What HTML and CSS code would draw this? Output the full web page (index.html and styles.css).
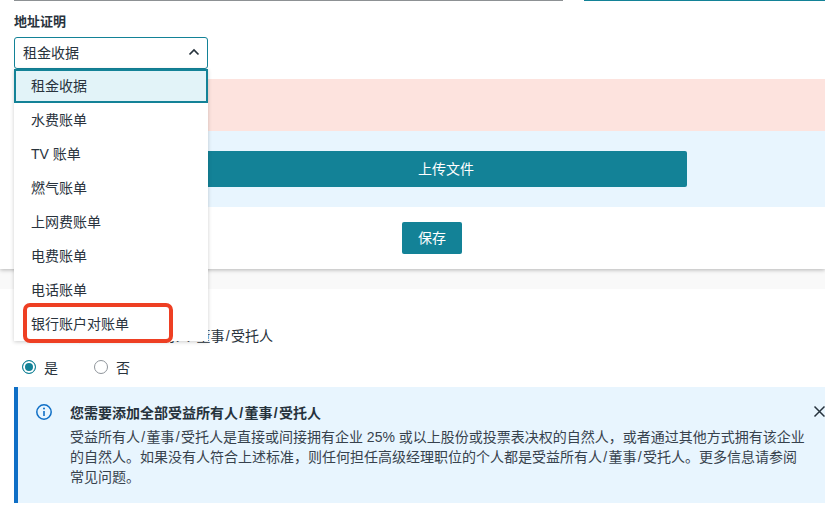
FILE: index.html
```html
<!DOCTYPE html>
<html lang="zh">
<head>
<meta charset="utf-8">
<title>地址证明</title>
<link rel="stylesheet" href="styles.css">
</head>
<body>
<div class="page">
  <section class="card">
    <div class="rules">
      <span class="rule rule-grey"></span>
      <span class="rule rule-teal"></span>
    </div>
    <div class="field">
      <label class="field-label">地址证明</label>
      <div class="select">
        <span class="select-value">租金收据</span>
        <svg class="chevron" width="12" height="8" viewBox="0 0 12 8"><path d="M1.5 6.5 6 2l4.5 4.5" fill="none" stroke="#26323c" stroke-width="1.7"/></svg>
        <ul class="menu">
          <li class="option option-selected">租金收据</li>
          <li class="option">水费账单</li>
          <li class="option">TV 账单</li>
          <li class="option">燃气账单</li>
          <li class="option">上网费账单</li>
          <li class="option">电费账单</li>
          <li class="option">电话账单</li>
          <li class="option">银行账户对账单</li>
        </ul>
        <span class="highlight"></span>
      </div>
    </div>
    <div class="band-error"></div>
    <div class="band-upload">
      <button class="btn btn-upload"><span class="btn-label">上传文件</span></button>
    </div>
    <div class="save-row">
      <button class="btn btn-save"><span class="btn-label">保存</span></button>
    </div>
  </section>
  <div class="gap"></div>
  <section class="owners">
    <p class="question">企业是否有受益所有人<span class="sl">/</span>董事<span class="sl">/</span>受托人</p>
    <div class="radios">
      <label class="radio"><span class="dot dot-on"></span>是</label>
      <label class="radio"><span class="dot"></span>否</label>
    </div>
    <div class="notice">
      <svg class="notice-icon" width="18" height="18" viewBox="0 0 18 18"><circle cx="9" cy="9" r="7.2" fill="none" stroke="#0f6fc6" stroke-width="1.5"/><circle cx="9" cy="5.6" r="1" fill="#0f6fc6"/><path d="M9 8v5" stroke="#0f6fc6" stroke-width="1.6"/></svg>
      <div class="notice-text">
        <h4 class="notice-title">您需要添加全部受益所有人<span class="sl">/</span>董事<span class="sl">/</span>受托人</h4>
        <p class="notice-body">受益所有人<span class="sl">/</span>董事<span class="sl">/</span>受托人是直接或间接拥有企业 25% 或以上股份或投票表决权的自然人，或者通过其他方式拥有该企业<br>的自然人。如果没有人符合上述标准，则任何担任高级经理职位的个人都是受益所有人<span class="sl">/</span>董事<span class="sl">/</span>受托人。更多信息请参阅<br>常见问题。</p>
      </div>
      <svg class="notice-close" width="13" height="13" viewBox="0 0 13 13"><path d="M1.5 1.5l10 10M11.5 1.5l-10 10" stroke="#26323c" stroke-width="1.5" fill="none"/></svg>
    </div>
  </section>
</div>
</body>
</html>
```
FILE: styles.css
```css
* { box-sizing: border-box; }
html, body { margin: 0; padding: 0; height: 100%; }
body {
  background: #fff;
  color: #29333d;
  font-family: "Liberation Sans", "Noto Sans CJK SC", sans-serif;
  font-size: 14px;
  overflow: hidden;
}
.page { width: 825px; height: 521px; overflow: hidden; }
.sl { margin: 0 1.3px; }

.card {
  background: #fff;
  box-shadow: 0 1px 4px rgba(0, 0, 0, .28);
  position: relative;
  z-index: 1;
}
.rules { display: flex; gap: 21px; padding-left: 14px; height: 1px; }
.rule { display: block; height: 1px; }
.rule-grey { width: 549px; background: #8d9194; }
.rule-teal { flex: 1; background: #138297; }

.field { padding: 13px 0 0 14px; }
.field-label {
  display: block;
  height: 23px;
  font-size: 13px;
  line-height: 16px;
  font-weight: 700;
  color: #29333d;
}
.select {
  position: relative;
  width: 194px;
  height: 32px;
  border: 1px solid #138297;
  border-radius: 3px;
  padding: 0 8px;
  display: flex;
  align-items: center;
  justify-content: space-between;
  z-index: 2;
}
.select-value { margin-top: -2px; }
.chevron { margin-right: -1px; margin-top: -2px; }
.menu {
  position: absolute;
  top: 31px;
  left: -1px;
  width: 194px;
  margin: 0;
  padding: 0;
  list-style: none;
  background: #fff;
  box-shadow: 0 1px 4px rgba(0, 0, 0, .2);
}
.option { height: 34px; line-height: 34px; padding-left: 17px; }
.option-selected {
  background: #e2f3f8;
  border: 2px solid #138297;
  line-height: 30px;
  padding-left: 15px;
}
.highlight {
  position: absolute;
  top: 265px;
  left: 8px;
  width: 150px;
  height: 40px;
  border: 4px solid #ee3f23;
  border-radius: 7px;
}

.band-error { margin: 10px 0 0 14px; height: 52px; background: #fde3de; }
.band-upload { margin-left: 14px; padding: 20px 0 20px 191px; background: #e8f5fe; }
.btn {
  display: block;
  border: 0;
  border-radius: 2px;
  background: #138297;
  color: #fff;
  font: inherit;
  padding: 0 0 2px;
}
.btn-label { display: block; }
.btn-upload { width: 482px; height: 36px; }
.save-row { padding: 15px 0; display: flex; justify-content: center; margin-left: 39px; }
.btn-save { width: 60px; height: 32px; }

.gap { height: 20px; background: #f9f9f9; }

.owners { padding: 40px 0 0 14px; }
.question { margin: 0; height: 20px; line-height: 14px; padding-left: 36px; white-space: nowrap; }
.radios { display: flex; gap: 36px; height: 38px; padding: 0 0 2px 8px; align-items: center; }
.radio { display: flex; align-items: center; gap: 8px; }
.dot {
  display: block;
  width: 14px;
  height: 14px;
  border-radius: 50%;
  border: 1px solid #8f959b;
  background: #fff;
}
.dot-on {
  border-color: #138297;
  box-shadow: inset 0 0 0 2px #fff;
  background: #138297;
}
.notice {
  display: flex;
  width: 811px;
  height: 116px;
  background: #e8f5fe;
  border-left: 4px solid #0f6fc6;
  padding: 16px 0 0 17px;
  gap: 17px;
  position: relative;
}
.notice-icon { flex: none; }
.notice-text { width: 738px; flex: none; }
.notice-title { margin: 0 0 4px; font-size: 14px; line-height: 20px; font-weight: 700; color: #26323c; }
.notice-body { margin: 0; line-height: 20px; color: #37424d; }
.notice-close { position: absolute; top: 18px; right: -1px; }
```
